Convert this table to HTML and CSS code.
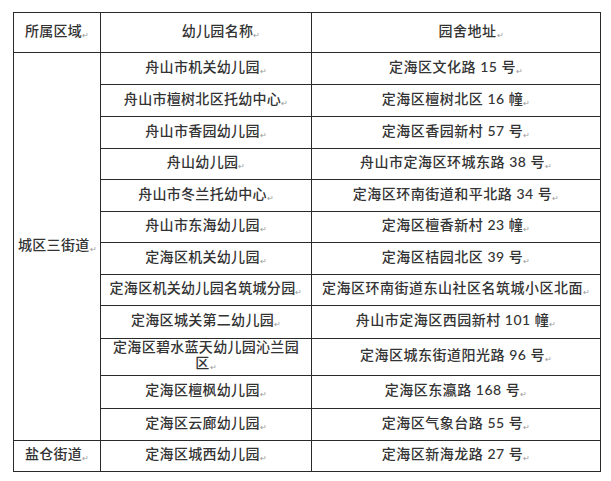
FILE: index.html
```html
<!DOCTYPE html>
<html lang="zh">
<head>
<meta charset="utf-8">
<link rel="stylesheet" href="styles.css">
</head>
<body>
<div class="page">
<table class="kg">
<colgroup><col class="c1"><col class="c2"><col class="c3"></colgroup>
<thead>
<tr class="hd">
<th>所属区域<span class="pm">↵</span></th>
<th class="ind">幼儿园名称<span class="pm">↵</span></th>
<th class="ind addr">园舍地址<span class="pm">↵</span></th>
</tr>
</thead>
<tbody>
<tr><td rowspan="12">城区三街道<span class="pm">↵</span></td><td>舟山市机关幼儿园<span class="pm">↵</span></td><td class="addr">定海区文化路 15 号<span class="pm">↵</span></td></tr>
<tr><td>舟山市檀树北区托幼中心<span class="pm">↵</span></td><td class="addr">定海区檀树北区 16 幢<span class="pm">↵</span></td></tr>
<tr><td>舟山市香园幼儿园<span class="pm">↵</span></td><td class="addr">定海区香园新村 57 号<span class="pm">↵</span></td></tr>
<tr class="s31"><td>舟山幼儿园<span class="pm">↵</span></td><td class="addr">舟山市定海区环城东路 38 号<span class="pm">↵</span></td></tr>
<tr><td>舟山市冬兰托幼中心<span class="pm">↵</span></td><td class="addr">定海区环南街道和平北路 34 号<span class="pm">↵</span></td></tr>
<tr class="s31"><td>舟山市东海幼儿园<span class="pm">↵</span></td><td class="addr">定海区檀香新村 23 幢<span class="pm">↵</span></td></tr>
<tr><td>定海区机关幼儿园<span class="pm">↵</span></td><td class="addr">定海区桔园北区 39 号<span class="pm">↵</span></td></tr>
<tr class="s31"><td>定海区机关幼儿园名筑城分园<span class="pm">↵</span></td><td class="addr">定海区环南街道东山社区名筑城小区北面<span class="pm">↵</span></td></tr>
<tr class="s33"><td>定海区城关第二幼儿园<span class="pm">↵</span></td><td class="addr">舟山市定海区西园新村 101 幢<span class="pm">↵</span></td></tr>
<tr class="s34"><td class="two">定海区碧水蓝天幼儿园沁兰园<br>区<span class="pm">↵</span></td><td class="addr">定海区城东街道阳光路 96 号<span class="pm">↵</span></td></tr>
<tr class="s33"><td>定海区檀枫幼儿园<span class="pm">↵</span></td><td class="addr">定海区东瀛路 168 号<span class="pm">↵</span></td></tr>
<tr><td>定海区云廊幼儿园<span class="pm">↵</span></td><td class="addr">定海区气象台路 55 号<span class="pm">↵</span></td></tr>
<tr class="s31"><td>盐仓街道<span class="pm">↵</span></td><td>定海区城西幼儿园<span class="pm">↵</span></td><td class="addr">定海区新海龙路 27 号<span class="pm">↵</span></td></tr>
</tbody>
</table>
</div>
</body>
</html>
```
FILE: styles.css
```css
html, body {
  margin: 0;
  padding: 0;
  background: #ffffff;
}
.page {
  padding: 12px 0 0 13px;
}
.kg {
  border-collapse: collapse;
  table-layout: fixed;
  width: 587px;
  font-family: Lato, "Noto Sans CJK SC", sans-serif;
  font-size: 14px;
  font-weight: 500;
  letter-spacing: 0.3px;
  color: #333333;
}
.c1 { width: 87px; }
.c2 { width: 211px; }
.c3 { width: 289px; }
.kg th, .kg td {
  border: 1px solid #2a2a2a;
  padding: 0 4px;
  text-align: center;
  vertical-align: middle;
  font-weight: 500;
  line-height: 17px;
  white-space: nowrap;
}
.kg .addr { letter-spacing: 0.5px; }
.kg .hd { height: 40px; }
.kg tbody tr { height: 32px; }
.kg tbody tr.s31 { height: 31px; }
.kg tbody tr.s33 { height: 33px; }
.kg tbody tr.s34 { height: 34px; }
.kg th.ind { padding-left: 34px; }
.kg td.two { line-height: 16px; }
.pm {
  display: inline-block;
  width: 7px;
  font-size: 8px;
  letter-spacing: 0;
  color: #9a9a9a;
  vertical-align: -2px;
  text-align: left;
}
```
